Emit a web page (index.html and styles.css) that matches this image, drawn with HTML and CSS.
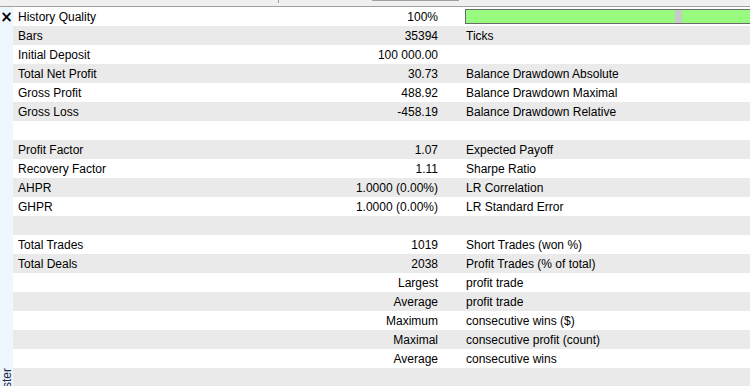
FILE: index.html
```html
<!DOCTYPE html>
<html>
<head>
<meta charset="utf-8">
<link rel="stylesheet" href="styles.css">
</head>
<body>
<div class="app">
  <div class="topbar">
    <span class="tick"></span>
    <span class="tabedge"></span>
  </div>
  <div class="main">
    <aside class="side">
      <span class="close">×</span>
      <span class="vlabel">Strategy Tester</span>
    </aside>
    <div class="table">
      <div class="row"><span class="lbl">History Quality</span><span class="val">100%</span><span class="rlbl"><span class="bar"><span class="g1"></span><span class="gs"></span><span class="g2"></span></span></span></div>
      <div class="row alt"><span class="lbl">Bars</span><span class="val">35394</span><span class="rlbl">Ticks</span></div>
      <div class="row"><span class="lbl">Initial Deposit</span><span class="val">100 000.00</span><span class="rlbl"></span></div>
      <div class="row alt"><span class="lbl">Total Net Profit</span><span class="val">30.73</span><span class="rlbl">Balance Drawdown Absolute</span></div>
      <div class="row"><span class="lbl">Gross Profit</span><span class="val">488.92</span><span class="rlbl">Balance Drawdown Maximal</span></div>
      <div class="row alt"><span class="lbl">Gross Loss</span><span class="val">-458.19</span><span class="rlbl">Balance Drawdown Relative</span></div>
      <div class="row"><span class="lbl"></span><span class="val"></span><span class="rlbl"></span></div>
      <div class="row alt"><span class="lbl">Profit Factor</span><span class="val">1.07</span><span class="rlbl">Expected Payoff</span></div>
      <div class="row"><span class="lbl">Recovery Factor</span><span class="val">1.11</span><span class="rlbl">Sharpe Ratio</span></div>
      <div class="row alt"><span class="lbl">AHPR</span><span class="val">1.0000 (0.00%)</span><span class="rlbl">LR Correlation</span></div>
      <div class="row"><span class="lbl">GHPR</span><span class="val">1.0000 (0.00%)</span><span class="rlbl">LR Standard Error</span></div>
      <div class="row alt"><span class="lbl"></span><span class="val"></span><span class="rlbl"></span></div>
      <div class="row"><span class="lbl">Total Trades</span><span class="val">1019</span><span class="rlbl">Short Trades (won %)</span></div>
      <div class="row alt"><span class="lbl">Total Deals</span><span class="val">2038</span><span class="rlbl">Profit Trades (% of total)</span></div>
      <div class="row"><span class="lbl"></span><span class="val">Largest</span><span class="rlbl">profit trade</span></div>
      <div class="row alt"><span class="lbl"></span><span class="val">Average</span><span class="rlbl">profit trade</span></div>
      <div class="row"><span class="lbl"></span><span class="val">Maximum</span><span class="rlbl">consecutive wins ($)</span></div>
      <div class="row alt"><span class="lbl"></span><span class="val">Maximal</span><span class="rlbl">consecutive profit (count)</span></div>
      <div class="row"><span class="lbl"></span><span class="val">Average</span><span class="rlbl">consecutive wins</span></div>
      <div class="row alt"><span class="lbl"></span><span class="val"></span><span class="rlbl"></span></div>
    </div>
  </div>
</div>
</body>
</html>
```
FILE: styles.css
```css
html, body {
  margin: 0;
  padding: 0;
  overflow: hidden;
  background: #ffffff;
}
body {
  font-family: "Liberation Sans", Arial, sans-serif;
  font-size: 12px;
  color: #000;
}
.app {
  width: 750px;
  height: 386px;
  display: flex;
  flex-direction: column;
  overflow: hidden;
}
.topbar {
  height: 6px;
  flex: none;
  background: #f0f0f0;
  border-bottom: 1px solid #a0a0a0;
  display: flex;
  align-items: flex-start;
}
.tick {
  width: 1px;
  height: 3px;
  background: #a0a0a0;
  margin-left: 278px;
}
.tabedge {
  width: 87px;
  height: 1px;
  background: #a0a0a0;
  margin-left: 93px;
}
.main {
  flex: 1;
  display: flex;
  min-height: 0;
}
.side {
  width: 13px;
  flex: none;
  background: #eef6fe;
  display: flex;
  flex-direction: column;
  align-items: center;
  justify-content: space-between;
  overflow: hidden;
}
.close {
  font-family: "DejaVu Sans", sans-serif;
  font-size: 15px;
  font-weight: bold;
  line-height: 14px;
  margin-top: 3px;
  margin-left: 0;
  color: #000;
}
.vlabel {
  writing-mode: vertical-rl;
  transform: rotate(180deg);
  white-space: nowrap;
  color: #1c2a4a;
  font-size: 12px;
  line-height: 12px;
  margin-bottom: -62px;
}
.table {
  flex: 1;
  display: flex;
  flex-direction: column;
}
.row {
  height: 19px;
  flex: none;
  display: grid;
  grid-template-columns: 200px 225px 1fr;
  align-items: center;
  background: #ffffff;
  white-space: nowrap;
}
.row.alt {
  background: #eaeaea;
}
.lbl {
  padding-left: 5px;
}
.val {
  text-align: right;
}
.rlbl {
  padding-left: 28px;
  display: flex;
  align-items: center;
}
.bar {
  display: flex;
  width: 320px;
  height: 13px;
  margin-left: -1px;
  border: 1px solid #6a6a6a;
  background: #98fb80;
  flex: none;
}
.g1 {
  width: 209px;
  background: #98fb80;
}
.gs {
  width: 7px;
  background: #c9c9c9;
}
.g2 {
  flex: 1;
  background: #98fb80;
}
```
